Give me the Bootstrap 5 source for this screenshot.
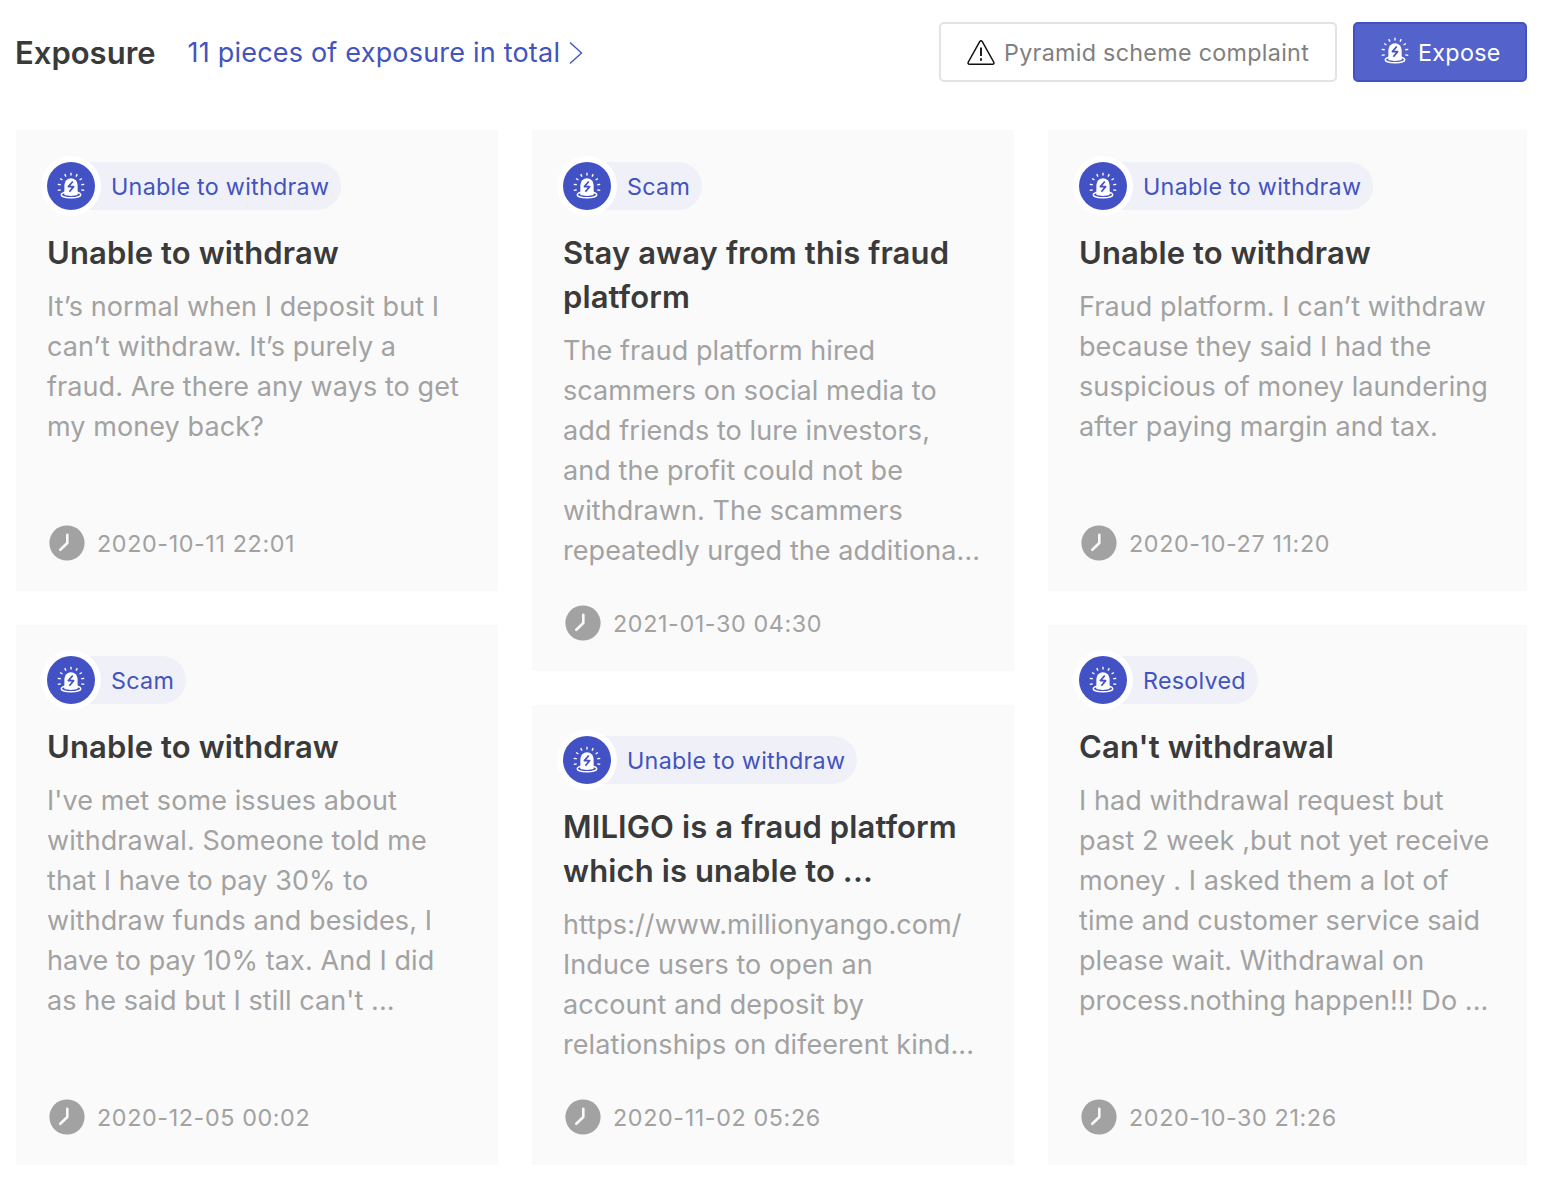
<!DOCTYPE html>
<html lang="en">
<head>
<meta charset="utf-8">
<meta name="viewport" content="width=device-width, initial-scale=1">
<title>Exposure</title>
<link rel="stylesheet" href="https://cdn.jsdelivr.net/npm/bootstrap@5.3.0/dist/css/bootstrap.min.css">
<style>
body{font-family:Inter,"Liberation Sans",sans-serif;background:#fff;color:#3a3a3a;overflow:hidden}
.page{padding:22px 25px 0 16px}
.topbar{height:60px;margin-bottom:48px}
.heading{font-size:31px;line-height:60px;font-weight:600;letter-spacing:0;margin:0 32px 0 -1px;padding-top:2px;white-space:nowrap}
.total{font-size:27px;line-height:60px;color:#4353c0;text-decoration:none;letter-spacing:.2px;white-space:nowrap;padding-top:1px}
.act{height:60px;font-size:23.3px;line-height:1;border-width:2px;border-radius:5px;padding:2px 0 0 25px;white-space:nowrap;letter-spacing:.3px}
.act-plain{width:398px;border-color:#e3e3e3;color:#808080;background:#fff}
.act-main{width:174px;border-color:#4250c3;background:#5463cb;color:#fff}
.act-main:hover{background:#4250c3;color:#fff}
.columns{gap:34px}
.stack{gap:34px;width:482px;flex:none}
.stack-end{width:479px}
.post{background:#fafafa;padding:32px 0 0 32px;white-space:nowrap}
.post + .post{padding-top:31px}
.h461{height:461px}.h541{height:541px}.h540{height:540px}.h460{height:460px}
.tag{height:48px;border-radius:24px;background:#f0f1f8;color:#4353c0;font-size:23.3px;letter-spacing:.27px;line-height:50px;padding-right:12px;margin-bottom:21px;margin-left:-1px}
.disc{width:48px;height:48px;border-radius:50%;background:#4252c5;box-shadow:0 0 0 6px #fff;margin-right:16px;flex:none}
.title{font-size:31px;line-height:44px;font-weight:600;margin:0 0 12px -1px;letter-spacing:.12px}
.text{font-size:27px;line-height:40px;color:#a2a2a2;margin:0 0 0 -1px;letter-spacing:.08px}
.when{font-size:23.3px;line-height:38px;height:36px;color:#a2a2a2;margin:auto 0 30px 1px;gap:12px;letter-spacing:.62px}
</style>
</head>
<body>
<svg width="0" height="0" class="position-absolute" aria-hidden="true">
<symbol id="siren" viewBox="0 0 30 30">
<path d="M7.900 23.500V13.800a7.100 7.100 0 0 1 14.200 0v9.700z" fill="#fff"/>
<ellipse cx="15" cy="24.300" rx="10.500" ry="3.300" fill="none" stroke="#fff" stroke-width="1.500"/>
<path d="M7.900 21h14.200v3.500c-3 1.600-11.200 1.600-14.200 0z" fill="#fff"/>
<path d="M15 .8v3M8.300 2.300l1.300 2.600M21.700 2.300l-1.300 2.600M3.300 7l2.500 1.600M26.700 7l-2.500 1.600M.8 13.200l3.200.5M29.200 13.200l-3.200.5M.8 19.700l3.200-.6M29.200 19.700l-3.200-.6" stroke="#fff" stroke-width="1.500" fill="none"/>
<path d="M16.900 10.200l-4.700 5.500h5.600l-4.500 5.500" fill="none" stroke="currentColor" stroke-width="1.800" stroke-linejoin="round"/>
</symbol>
<symbol id="clock" viewBox="0 0 36 36">
<circle cx="18" cy="18" r="17.600" fill="#a2a2a2"/>
<path d="M18.300 9.800v8.200l-7 6.800" fill="none" stroke="#fafafa" stroke-width="2.600" stroke-linecap="round" stroke-linejoin="round"/>
</symbol>
</svg>
<main class="page">
<header class="topbar d-flex align-items-center">
<h1 class="heading">Exposure</h1>
<a class="total d-flex align-items-center" href="#"><span>11 pieces of exposure in total</span><svg width="16" height="24" viewBox="0 0 16 24" class="ms-2"><path d="M2 1.500L13.500 12 2 22.500" fill="none" stroke="currentColor" stroke-width="1.400"/></svg></a>
<div class="d-flex ms-auto gap-3">
<button class="btn act act-plain d-flex align-items-center"><svg width="30" height="28" viewBox="0 0 30 28" class="me-2 flex-shrink-0"><path d="M13.700 2.700Q15 .8 16.300 2.700L27.800 23.200Q28.400 25.200 26.500 25.300H3.500Q1.600 25.200 2.200 23.200z" fill="none" stroke="#111" stroke-width="1.500"/><path d="M15 8.500v8.500M15 19.300v2.400" stroke="#111" stroke-width="1.900"/></svg><span>Pyramid scheme complaint</span></button>
<button class="btn act act-main d-flex align-items-center"><svg width="30" height="28" class="flex-shrink-0 mb-1" color="#4250c3"><use href="#siren"/></svg><span class="ms-2">Expose</span></button>
</div>
</header>
<div class="columns d-flex">
<section class="stack d-flex flex-column">
<article class="post h461 d-flex flex-column align-items-start">
<div class="tag d-flex"><span class="disc d-flex align-items-center justify-content-center"><svg width="28" height="28" color="#4252c5"><use href="#siren"/></svg></span>Unable to withdraw</div>
<h2 class="title">Unable to withdraw</h2>
<p class="text">It’s normal when I deposit but I<br>can’t withdraw. It’s purely a<br>fraud. Are there any ways to get<br>my money back?</p>
<div class="when d-flex"><svg width="36" height="36"><use href="#clock"/></svg>2020-10-11 22:01</div>
</article>
<article class="post h540 d-flex flex-column align-items-start">
<div class="tag d-flex"><span class="disc d-flex align-items-center justify-content-center"><svg width="28" height="28" color="#4252c5"><use href="#siren"/></svg></span>Scam</div>
<h2 class="title">Unable to withdraw</h2>
<p class="text">I've met some issues about<br>withdrawal. Someone told me<br>that I have to pay 30% to<br>withdraw funds and besides, I<br>have to pay 10% tax. And I did<br>as he said but I still can't ...</p>
<div class="when d-flex"><svg width="36" height="36"><use href="#clock"/></svg>2020-12-05 00:02</div>
</article>
</section>
<section class="stack d-flex flex-column">
<article class="post h541 d-flex flex-column align-items-start">
<div class="tag d-flex"><span class="disc d-flex align-items-center justify-content-center"><svg width="28" height="28" color="#4252c5"><use href="#siren"/></svg></span>Scam</div>
<h2 class="title">Stay away from this fraud<br>platform</h2>
<p class="text">The fraud platform hired<br>scammers on social media to<br>add friends to lure investors,<br>and the profit could not be<br>withdrawn. The scammers<br>repeatedly urged the additiona...</p>
<div class="when d-flex"><svg width="36" height="36"><use href="#clock"/></svg>2021-01-30 04:30</div>
</article>
<article class="post h460 d-flex flex-column align-items-start">
<div class="tag d-flex"><span class="disc d-flex align-items-center justify-content-center"><svg width="28" height="28" color="#4252c5"><use href="#siren"/></svg></span>Unable to withdraw</div>
<h2 class="title">MILIGO is a fraud platform<br>which is unable to ...</h2>
<p class="text">https://www.millionyango.com/<br>Induce users to open an<br>account and deposit by<br>relationships on difeerent kind...</p>
<div class="when d-flex"><svg width="36" height="36"><use href="#clock"/></svg>2020-11-02 05:26</div>
</article>
</section>
<section class="stack stack-end d-flex flex-column">
<article class="post h461 d-flex flex-column align-items-start">
<div class="tag d-flex"><span class="disc d-flex align-items-center justify-content-center"><svg width="28" height="28" color="#4252c5"><use href="#siren"/></svg></span>Unable to withdraw</div>
<h2 class="title">Unable to withdraw</h2>
<p class="text">Fraud platform. I can’t withdraw<br>because they said I had the<br>suspicious of money laundering<br>after paying margin and tax.</p>
<div class="when d-flex"><svg width="36" height="36"><use href="#clock"/></svg>2020-10-27 11:20</div>
</article>
<article class="post h540 d-flex flex-column align-items-start">
<div class="tag d-flex"><span class="disc d-flex align-items-center justify-content-center"><svg width="28" height="28" color="#4252c5"><use href="#siren"/></svg></span>Resolved</div>
<h2 class="title">Can't withdrawal</h2>
<p class="text">I had withdrawal request but<br>past 2 week ,but not yet receive<br>money . I asked them a lot of<br>time and customer service said<br>please wait. Withdrawal on<br>process.nothing happen!!! Do ...</p>
<div class="when d-flex"><svg width="36" height="36"><use href="#clock"/></svg>2020-10-30 21:26</div>
</article>
</section>
</div>
</main>
<script src="https://cdn.jsdelivr.net/npm/bootstrap@5.3.0/dist/js/bootstrap.bundle.min.js"></script>
</body>
</html>
